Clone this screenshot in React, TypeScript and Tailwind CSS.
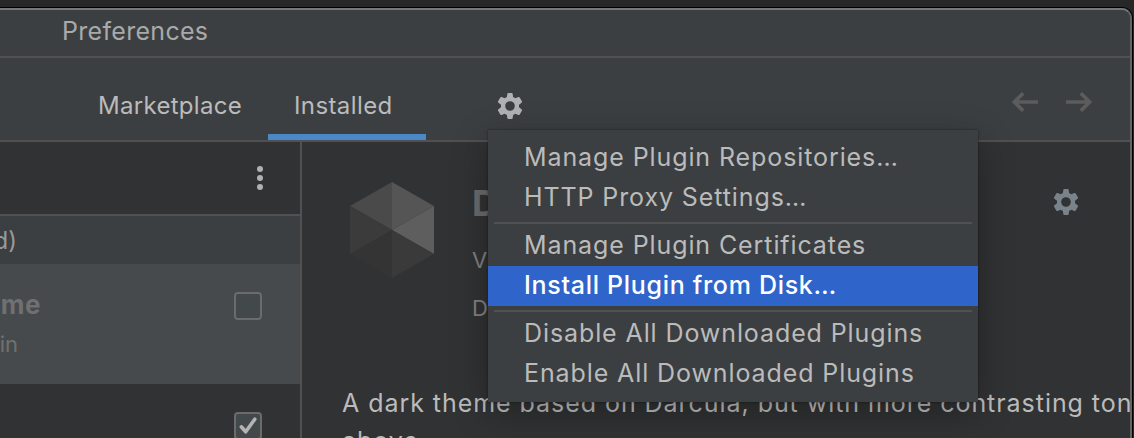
import type { ReactNode } from "react";

function Gear({ className }: { className: string }) {
  return (
    <svg className={className} viewBox="0 0 26 26" fill="currentColor">
      <path
        fillRule="evenodd"
        d="M10.3 0.9 Q10.4 0 11.3 0 H14.7 Q15.6 0 15.7 0.9 L16.1 4 L18.4 5.3 L21.3 4.1 Q22.2 3.8 22.7 4.6 L24.9 8.3 Q25.3 9.1 24.6 9.7 L22 11.7 V14.3 L24.6 16.3 Q25.3 16.9 24.9 17.7 L22.7 21.4 Q22.2 22.2 21.3 21.9 L18.4 20.7 L16.1 22 L15.7 25.1 Q15.6 26 14.7 26 H11.3 Q10.4 26 10.3 25.1 L9.9 22 L7.6 20.7 L4.7 21.9 Q3.8 22.2 3.3 21.4 L1.1 17.7 Q0.7 16.9 1.4 16.3 L4 14.3 V11.7 L1.4 9.7 Q0.7 9.1 1.1 8.3 L3.3 4.6 Q3.8 3.8 4.7 4.1 L7.6 5.3 L9.9 4 Z M13 8.2 A4.8 4.8 0 1 0 13 17.8 A4.8 4.8 0 1 0 13 8.2 Z"
      />
    </svg>
  );
}

function Arrow({ className }: { className: string }) {
  return (
    <svg className={className} viewBox="0 0 26 20" fill="none" stroke="currentColor" strokeWidth="3.6">
      <path d="M26 10H3M11.2 1.2L2.4 10l8.8 8.8" />
    </svg>
  );
}

function PluginLogo() {
  return (
    <svg className="mt-10 ml-12 h-24 w-[84px] shrink-0" viewBox="0 0 84 96">
      <path d="M42 48L0 24L42 0Z" fill="#4a4a4a" />
      <path d="M42 48V0L84 24Z" fill="#555555" />
      <path d="M42 48L84 24V72Z" fill="#5e5e5e" />
      <path d="M42 48L84 72L42 96Z" fill="#3a3a3a" />
      <path d="M42 48V96L0 72Z" fill="#343434" />
      <path d="M42 48L0 72V24Z" fill="#3b3b3b" />
    </svg>
  );
}

function Checkbox({ checked = false }: { checked?: boolean }) {
  return (
    <span className="block size-7 shrink-0 rounded-[4px] border-2 border-[#6b6b6b] bg-[#43494a]">
      {checked && (
        <svg className="size-6" viewBox="0 0 24 24" fill="none" stroke="#b4b4b4" strokeWidth="3.6" strokeLinecap="round" strokeLinejoin="round">
          <path d="M5.3 12.8L9.7 17.8L18.8 5.2" />
        </svg>
      )}
    </span>
  );
}

function MenuItem({ children, selected = false }: { children: ReactNode; selected?: boolean }) {
  return (
    <div className={`h-10 pl-9 text-[25px] leading-[39px] ${selected ? "bg-[#2f65ca] font-medium tracking-[0.7px] text-white" : "tracking-[0.9px] text-[#bbbbbb]"}`}>
      {children}
    </div>
  );
}

function Separator() {
  return <div className="mx-1.5 mt-1 mb-0.5 h-0.5 bg-[#515151]" />;
}

export default function App() {
  return (
    <div className="relative h-[438px] w-[1134px] overflow-hidden bg-[#272727] pt-[7px] font-['Inter',sans-serif] whitespace-nowrap">
      <div className="flex h-[440px] w-[1133px] flex-col rounded-tr-[11px] border-t border-r border-black bg-[#3c3f41]">
        <div className="flex h-full flex-col overflow-hidden rounded-tr-[10px] border-t-2 border-r-2 border-t-[#74787a] border-r-[#626465]">
          <header className="h-12 shrink-0 border-b-2 border-[#515151] pl-[62px] text-[25px] leading-[42px] tracking-[0.3px] text-[#a9a9a9]">Preferences</header>

          <nav className="flex h-[84px] shrink-0 border-b-2 border-[#515151] text-2xl leading-[95px] text-[#bbbbbb]">
            <div className="w-[268px] pl-[98px] tracking-[0.3px]">Marketplace</div>
            <div className="h-[82px] w-[158px] overflow-hidden border-b-[6px] border-[#4a88c7] pl-[26px] tracking-[0.4px]">Installed</div>
            <Gear className="mt-[35px] ml-[71px] size-[26px] text-[#afb1b3]" />
            <div className="mt-[34px] ml-auto flex gap-7 pr-[38px] text-[#5c5c5c]">
              <Arrow className="h-5 w-[26px]" />
              <Arrow className="h-5 w-[26px] rotate-180" />
            </div>
          </nav>

          <div className="flex min-h-0 flex-1">
            <aside className="flex w-[302px] shrink-0 flex-col border-r-2 border-[#515151] bg-[#313233]">
              <div className="flex h-[74px] shrink-0 justify-end border-b-2 border-[#515151] pt-6 pr-[37px]">
                <div className="flex flex-col gap-[3px]">
                  <span className="size-1.5 rounded-full bg-[#afb1b3]" />
                  <span className="size-1.5 rounded-full bg-[#afb1b3]" />
                  <span className="size-1.5 rounded-full bg-[#afb1b3]" />
                </div>
              </div>
              <div className="flex h-12 shrink-0 bg-[#3c3f41] text-2xl leading-[50px] text-[#999999]">
                <span className="flex w-[17px] justify-end">d)</span>
              </div>
              <div className="flex h-[120px] shrink-0 bg-[#464a4c] text-[#707070]">
                <div className="w-[234px] overflow-hidden">
                  <div className="mt-[25px] flex w-[41px] justify-end text-[26px] leading-8 font-bold tracking-[0.5px]">me</div>
                  <div className="mt-[7px] flex w-[18px] justify-end text-[22px] leading-8">in</div>
                </div>
                <div className="pt-7"><Checkbox /></div>
              </div>
              <div className="flex pt-7 pl-[234px]"><Checkbox checked /></div>
            </aside>

            <main className="min-w-0 flex-1 bg-[#313233]">
              <div className="flex h-[241px]">
                <PluginLogo />
                <div className="ml-[38px] w-[581px] text-[22px] text-[#808080]">
                  <h1 className="mt-10 text-[36px] leading-[42px] font-bold text-[#6b6b6b]">D</h1>
                  <p className="mt-5 leading-8">V</p>
                  <p className="mt-4 leading-8">D</p>
                </div>
                <Gear className="mt-[47px] size-[26px] text-[#7a838a]" />
              </div>
              <p className="pt-px pl-10 text-[25px] leading-[38px] tracking-[0.95px] text-[#bbbbbb]">
                A dark theme based on Darcula, but with more contrasting ton
                <br />
                above.
              </p>
            </main>
          </div>
        </div>
      </div>

      <div className="absolute top-[130px] left-[488px] w-[490px] bg-[#3c3f41] py-2 shadow-[0_0_2px_rgba(0,0,0,0.5),0_10px_34px_rgba(0,0,0,0.3)]">
        <MenuItem>Manage Plugin Repositories…</MenuItem>
        <MenuItem>HTTP Proxy Settings…</MenuItem>
        <Separator />
        <MenuItem>Manage Plugin Certificates</MenuItem>
        <MenuItem selected>Install Plugin from Disk…</MenuItem>
        <Separator />
        <MenuItem>Disable All Downloaded Plugins</MenuItem>
        <MenuItem>Enable All Downloaded Plugins</MenuItem>
      </div>
    </div>
  );
}
